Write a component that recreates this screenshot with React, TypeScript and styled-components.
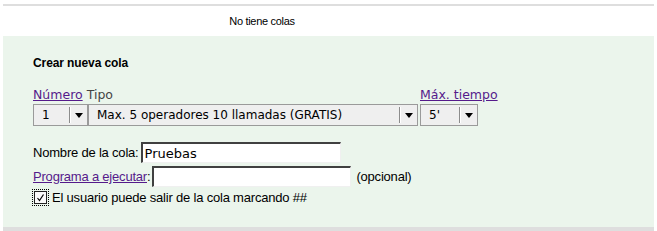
import React from "react";
import styled, { createGlobalStyle } from "styled-components";

const Global = createGlobalStyle`
  html, body { margin: 0; padding: 0; background: #ffffff; }
  body { font-family: "Liberation Sans", Arial, sans-serif; color: #000; }
`;

const Page = styled.div`
  padding: 4px 3px 0 3px;
  display: flex;
  flex-direction: column;
`;

const Rule = styled.div`
  height: 2px;
  background: #dedede;
`;

const Empty = styled.div`
  height: 30px;
  display: flex;
  align-items: center;
  justify-content: center;
  padding-right: 133px;
  font-size: 11px;
  letter-spacing: -0.3px;
`;

const Panel = styled.div`
  background: #ebf5ec;
  padding: 19px 30px 20px 30px;
  border-bottom: 4px solid #dedede;
  height: 152px;
  display: flex;
  flex-direction: column;
`;

const Title = styled.div`
  font-weight: bold;
  font-size: 12px;
  line-height: 16px;
  letter-spacing: -0.1px;
  margin-bottom: 16px;
`;

const Fields = styled.div`
  display: flex;
  align-items: flex-end;
`;

const Field = styled.div<{ $w: number; $ml: number }>`
  display: flex;
  flex-direction: column;
  width: ${(p) => p.$w}px;
  margin-left: ${(p) => p.$ml}px;
`;

const Labels = styled.div`
  display: flex;
  gap: 4px;
  font-family: "DejaVu Sans", sans-serif;
  font-size: 12.5px;
  line-height: 16px;
  white-space: nowrap;
  margin-bottom: 1px;
`;

const Link = styled.a`
  color: #551a8b;
  text-decoration: underline;
  cursor: pointer;
`;

const Plain = styled.span`
  color: #444;
`;

const Select = styled.div`
  height: 20px;
  border: 1px solid #9a9a9a;
  background: #efefef;
  display: flex;
  align-items: center;
  font-family: "DejaVu Sans", sans-serif;
  font-size: 12px;
  box-sizing: content-box;
`;

const SelectText = styled.span`
  flex: 1;
  padding-left: 8px;
  white-space: nowrap;
  overflow: hidden;
`;

const Arrow = styled.span`
  width: 17px;
  height: 16px;
  border-left: 1px solid #8c8c8c;
  box-shadow: inset 1px 0 0 #ffffff;
  display: flex;
  align-items: center;
  justify-content: center;
  &::after {
    content: "";
    border-left: 4px solid transparent;
    border-right: 4px solid transparent;
    border-top: 5px solid #000;
  }
`;

const Row = styled.div<{ $mt: number }>`
  display: flex;
  align-items: center;
  margin-top: ${(p) => p.$mt}px;
  font-size: 13px;
  letter-spacing: -0.2px;
  white-space: nowrap;
`;

const Input = styled.input<{ $w: number }>`
  width: ${(p) => p.$w}px;
  height: 21px;
  box-sizing: border-box;
  border: 1px solid #f0f0f0;
  border-top: 2px solid #404040;
  border-left: 2px solid #404040;
  background: #fff;
  font-family: "DejaVu Sans", sans-serif;
  font-size: 13px;
  letter-spacing: 0;
  padding: 0 2px;
  margin-left: 2px;
  outline: none;
`;

const Note = styled.span`
  margin-left: 5px;
`;

const CheckWrap = styled.span`
  width: 17px;
  height: 17px;
  box-sizing: border-box;
  border: 1px dotted #000;
  display: flex;
  align-items: center;
  justify-content: center;
  margin-left: -1px;
  margin-right: 3px;
`;

const Box = styled.span`
  width: 13px;
  height: 13px;
  box-sizing: border-box;
  border: 1px solid #222;
  background: #fafafa;
  display: flex;
  align-items: center;
  justify-content: center;
`;

export default function App() {
  return (
    <>
      <Global />
      <Page>
        <Rule />
        <Empty>No tiene colas</Empty>
        <Panel>
          <Title>Crear nueva cola</Title>
          <Fields>
            <Field $w={55} $ml={0}>
              <Labels>
                <Link>Número</Link>
                <Plain>Tipo</Plain>
              </Labels>
              <Select>
                <SelectText>1</SelectText>
                <Arrow />
              </Select>
            </Field>
            <Field $w={330} $ml={0}>
              <Select>
                <SelectText>Max. 5 operadores 10 llamadas (GRATIS)</SelectText>
                <Arrow />
              </Select>
            </Field>
            <Field $w={58} $ml={2}>
              <Labels>
                <Link>Máx. tiempo</Link>
              </Labels>
              <Select>
                <SelectText>5'</SelectText>
                <Arrow />
              </Select>
            </Field>
          </Fields>
          <Row $mt={16}>
            Nombre de la cola:
            <Input $w={200} defaultValue="Pruebas" />
          </Row>
          <Row $mt={3}>
            <Link>Programa a ejecutar</Link>:
            <Input $w={199} />
            <Note>(opcional)</Note>
          </Row>
          <Row $mt={2}>
            <CheckWrap>
              <Box>
                <svg width="9" height="9" viewBox="0 0 9 9">
                  <path d="M1.5 5 L3.5 7.5 L7.5 1.5" fill="none" stroke="#000" strokeWidth="1.2" />
                </svg>
              </Box>
            </CheckWrap>
            El usuario puede salir de la cola marcando ##
          </Row>
        </Panel>
      </Page>
    </>
  );
}
